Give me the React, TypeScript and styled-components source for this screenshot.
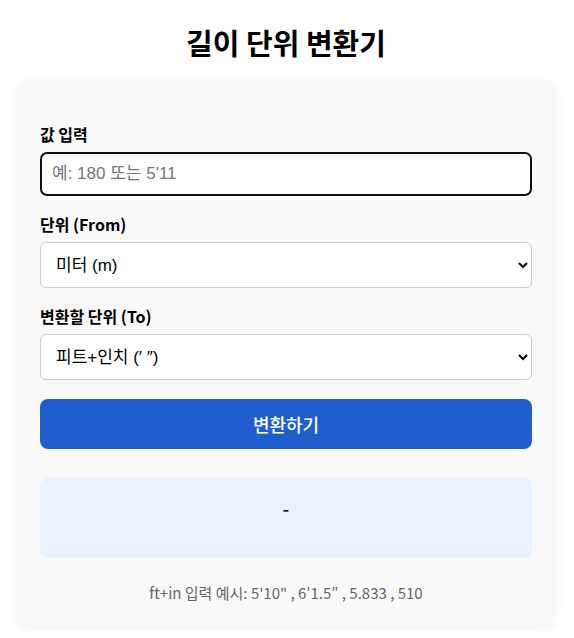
import React from "react";
import styled, { createGlobalStyle } from "styled-components";

const GlobalStyle = createGlobalStyle`
  body {
    margin: 0;
    background: #fff;
    color: #000;
    font-family: "Noto Sans CJK KR", sans-serif;
    font-size: 16px;
    line-height: 24px;
  }
  * { box-sizing: border-box; }
`;

const Page = styled.main`
  max-width: 640px;
  margin: 0 auto;
  padding: 20px 17px 11px 15px;
`;

const Title = styled.h1`
  margin: 0 0 16px;
  font-size: 29px;
  line-height: 44px;
  font-weight: 700;
  text-align: center;
`;

const Card = styled.form`
  padding: 42px 25px 22px;
  border-radius: 14px;
  background: #f9f9f9;
  box-shadow: 0 2px 10px rgba(0, 0, 0, 0.05);
`;

const Fields = styled.div`
  display: flex;
  flex-direction: column;
  gap: 16px;
`;

const Field = styled.div`
  display: flex;
  flex-direction: column;
  gap: 6px;
`;

const Label = styled.label`
  font-size: 16px;
  line-height: 24px;
  font-weight: 700;
`;

const TextInput = styled.input`
  width: 100%;
  height: 44px;
  padding: 0 10px;
  border: 2px solid #ccc;
  border-radius: 7px;
  background: #fff;
  font-family: "Liberation Sans", "Noto Sans CJK KR", sans-serif;
  font-size: 17px;
  &:focus { border-color: #101010; outline: none; }
  &::placeholder { color: #757575; }
`;

const Select = styled.select`
  width: 100%;
  height: 46px;
  padding: 0 0 0 11px;
  border: 1px solid #ccc;
  border-radius: 6px;
  background: #fff;
  color: #000;
  font-family: "Liberation Sans", "Noto Sans CJK KR", sans-serif;
  font-size: 17px;
`;

const ConvertButton = styled.button`
  display: block;
  width: 100%;
  height: 50px;
  margin-top: 19px;
  border: 0;
  border-radius: 8px;
  background: #205dcd;
  color: #fff;
  font: 500 18px/24px "Noto Sans CJK KR", sans-serif;
`;

const Result = styled.output`
  display: block;
  min-height: 80px;
  margin: 29px 0 23px;
  padding: 18px;
  border-radius: 8px;
  background: #e8f3ff;
  color: #111;
  text-align: center;
  font-size: 19px;
  font-weight: 500;
`;

const Hint = styled.p`
  margin: 0;
  color: #666;
  font-size: 15px;
  line-height: 24px;
  text-align: center;
`;

export default function App() {
  return (
    <>
      <GlobalStyle />
      <Page>
        <Title>길이 단위 변환기</Title>
        <Card onSubmit={(e) => e.preventDefault()}>
          <Fields>
            <Field>
              <Label htmlFor="value">값 입력</Label>
              <TextInput id="value" autoFocus placeholder="예: 180 또는 5'11" />
            </Field>
            <Field>
              <Label htmlFor="from">단위 (From)</Label>
              <Select id="from"><option>미터 (m)</option></Select>
            </Field>
            <Field>
              <Label htmlFor="to">변환할 단위 (To)</Label>
              <Select id="to"><option>피트+인치 (′ ″)</option></Select>
            </Field>
          </Fields>
          <ConvertButton>변환하기</ConvertButton>
          <Result>-</Result>
          <Hint>ft+in 입력 예시: 5'10" , 6′1.5″ , 5.833 , 510</Hint>
        </Card>
      </Page>
    </>
  );
}
